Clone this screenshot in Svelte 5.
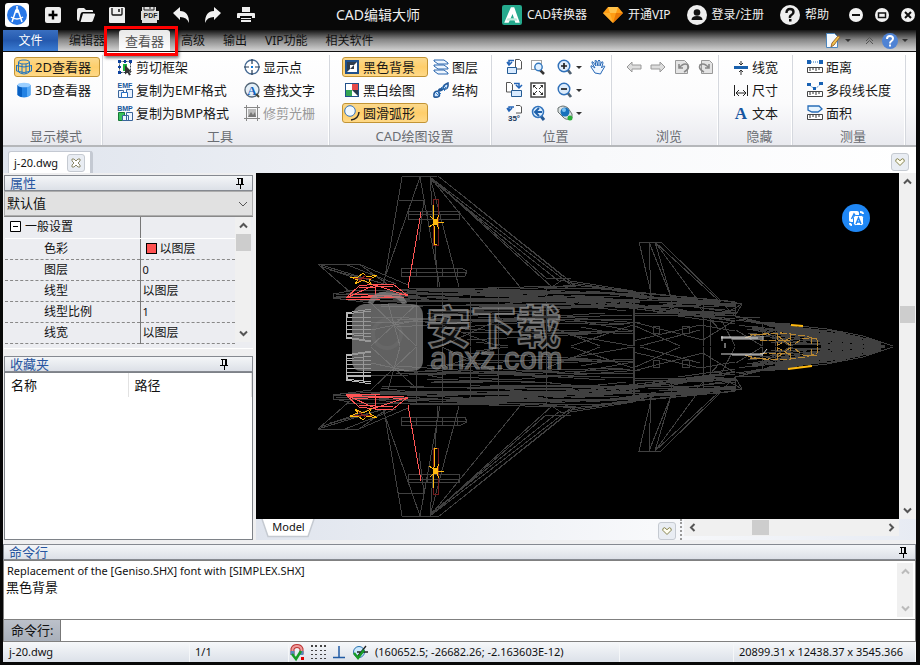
<script lang="ts">
  type Item = { icon: string; label: string; active?: boolean; disabled?: boolean };

  const icons: Record<string, string> = {
    plus: '<rect width="16" height="16" rx="2" fill="#eee"/><path d="M8 3.5v9M3.5 8h9" stroke="#000" stroke-width="2.4"/>',
    open: '<path d="M0 12V3q0-2 2-2h5l2 2h6q1 0 1 1v1H6Q4 5 3.500 7L2 14Q0 14 0 12z" fill="#eee"/><path d="M6 6.500h11q1.500 0 1 1.500l-2 5.500q-.5 1.500-2 1.500H3.500z" fill="#eee"/>',
    save: '<path d="M1 0h14l1 1v15H1q-1 0-1-1V1z" fill="#eee"/><path d="M3 1v6q0 1 1 1h8q1 0 1-1V1" fill="none" stroke="#111" stroke-width="1.300"/><path d="M10 2v3" stroke="#111" stroke-width="1.500"/>',
    pdf: '<path d="M1 0h14v4h3v9h-2v3H1v-3h-1V4h1z" fill="#ddd"/><path d="M3 0v3h10V0" fill="none" stroke="#222"/><path d="M9 0v2" stroke="#222"/><text x="9.500" y="11" text-anchor="middle" font-size="7" font-weight="700" font-family="Liberation Sans" fill="#222">PDF</text>',
    undo: '<path d="M0 6L7 0v4q9 0 9 12q-2-6-9-6v3z" fill="#f2f2f2"/>',
    redo: '<path d="M16 6L9 0v4q-9 0-9 12q2-6 9-6v3z" fill="#f2f2f2"/>',
    print: '<path d="M5 0h8v5H5zM0 7q0-1 1-1h16q1 0 1 1v4h-3V9H3v2H0zM4 11h10v4H4z" fill="#eee"/><path d="M4 12.500h10" stroke="#111"/>',
    wire: '<g fill="none" stroke="#2475bd"><ellipse cx="8" cy="3" rx="5.500" ry="2"/><path d="M2.500 3v10q5.500 4 11 0V3M6 5v10M10 5v10M.5 6.500q7.500 3 15 0M.5 12q7.500 3 15 0M.5 6v6M15.500 6v6"/></g>',
    cylinder: '<path d="M1.500 3v10q6.500 5 13 0V3z" fill="#2382e4"/><path d="M1.500 3v10q2 2 4.500 2V4z" fill="#075fc2"/><path d="M11 4v11q2-.5 3.500-2V3z" fill="#58aaf6"/><ellipse cx="8" cy="3" rx="6.500" ry="2.300" fill="#9bcfff"/>',
    cut: '<rect x="2.500" y="2.500" width="11" height="11" fill="none" stroke="#345" stroke-dasharray="2 1"/><path d="M1 1h3v3H1zM7 1h2v3H7zM12 1h3v3h-3zM1 7h3v2H1zM1 12h3v3H1z" fill="#0c42a0"/><path d="M6 5h4v7H6z" fill="#1cb33b"/><path d="M8 6l7 7-3-.2 2 3-2 .8-1.500-3-2.500 2z" fill="#333"/>',
    emf: '<path d="M1.500 8.500h5v7h-5zM9.500 7.500h6v8h-6z" fill="#e8f2ff" stroke="#39649a"/><path d="M4.500 10.500h6v5h-6z" fill="#fff" stroke="#246cc0"/><text x="8" y="5.500" text-anchor="middle" font-size="7" font-weight="700" font-family="Liberation Sans" fill="#16579b">EMF</text>',
    bmp: '<path d="M1.500 7.500h6v8h-6z" fill="#37c05c" stroke="#167836"/><path d="M9.500 7.500h6v8h-6zM5.500 10.500h6v5h-6z" fill="#edf6ff" stroke="#39649a"/><text x="8" y="5.500" text-anchor="middle" font-size="7" font-weight="700" font-family="Liberation Sans" fill="#16579b">BMP</text>',
    point: '<circle cx="8" cy="8" r="7" fill="#fff" stroke="#476b94" stroke-width="1.300"/><path d="M8 0v5M8 11v5M0 8h5M11 8h5" stroke="#243a55" stroke-width="1.200"/><path d="M7 7h2v2H7z" fill="#0879dd"/>',
    find: '<circle cx="8" cy="8" r="7" fill="#e4eff7" stroke="#526577" stroke-width="1.300"/><text x="8" y="12.500" text-anchor="middle" font-size="13" font-weight="700" font-family="Liberation Serif" fill="#1463bd">A</text><path d="M12 12l3 3" stroke="#443" stroke-width="2"/>',
    raster: '<path d="M2.500 0v16M13.500 0v16M0 2.500h16M0 13.500h16" stroke="#888"/><path d="M4 4h8v8H4z" fill="#bbb"/><path d="M4 12l3-5 2 3 2-3 1 5z" fill="#777"/>',
    black: '<rect x="1" y="1" width="14" height="14" fill="#20508a"/><path d="M3 3h10v10H3z" fill="#fff"/><path d="M3 3h10L3 13z" fill="#303d4c"/><path d="M6 6h4v4H6z" fill="#fff"/><path d="M10 6v4H6z" fill="#303d4c"/>',
    mono: '<rect x="1" y="1" width="14" height="14" fill="#20508a"/><path d="M2 2h12v12H2z" fill="#fff"/><path d="M8 2h6v6H8z" fill="#e64a4a"/><path d="M2 8h6v6H2z" fill="#33a553"/><path d="M8 8h6v6H8z" fill="#28384c"/><path d="M8 8l6 6H8z" fill="#fff"/>',
    arc: '<circle cx="6" cy="6" r="5.300" fill="#f0f8ff" stroke="#3374bf"/><path d="M15 7q-.5 7-8 8" fill="none" stroke="#222" stroke-width="1.500"/>',
    layers: '<path d="M1 1h10l4 3v1H5L1 2z" fill="#eef6ff" stroke="#2865ad"/><path d="M1 6h10l4 3v1H5L1 7z" fill="#eef6ff" stroke="#2865ad"/><path d="M1 11h10l4 3v1H5l-4-3z" fill="#eef6ff" stroke="#2865ad"/>',
    structure: '<path d="M1 15q-1-6 4-6t5-3 5-5q1 7-5 6t-4 4-5 4" fill="#cfe5ff" stroke="#245999" stroke-width="1.600"/><path d="M2 10l4 4M5 9l3 3M8 5l4 4M10 3l4 4" stroke="#3380c8"/>',
    rotateLeft: '<path d="M9.500.5h4l2 2V10H9.500z" fill="#fff" stroke="#555"/><path d="M1.500 8.500h9v6h-9z" fill="#d9ebff" stroke="#245b94"/><path d="M8 1.500H3v3M1 3l2 3 3-3" fill="none" stroke="#2364b6" stroke-width="1.500"/>',
    rotateRight: '<path d="M.5.5h4l2 2V10h-6z" fill="#fff" stroke="#555"/><path d="M5.500 8.500h10v6h-10z" fill="#d9ebff" stroke="#245b94"/><path d="M8 1.500h5v3M10 3l3 3 3-3" fill="none" stroke="#2364b6" stroke-width="1.500"/>',
    rotate35: '<path d="M10 .5h4l1.500 1.500V8H10" fill="#fff" stroke="#555"/><path d="M8 2H3v3M1 3l2 3 3-3" fill="none" stroke="#2364b6" stroke-width="1.500"/><text x="8" y="15.500" text-anchor="middle" font-size="8" font-weight="700" font-family="Liberation Sans" fill="#17385c">35°</text>',
    zoomRect: '<path d="M1.500 1.500h10v9h-10z" fill="none" stroke="#444" stroke-dasharray="1 1"/><path d="M10 11l4 4" stroke="#333" stroke-width="2.500"/><circle cx="8.500" cy="8" r="3.700" fill="#e1f0ff" stroke="#3277bd" stroke-width="1.400"/>',
    fit: '<rect x="1" y="1" width="14" height="14" fill="#fff" stroke="#444" stroke-width="1.500"/><path d="M3 6V3h3zM10 3h3v3zM13 10v3h-3zM6 13H3v-3z" fill="#333"/><path d="M4 4l3 3M12 4L9 7M4 12l3-3M12 12L9 9" stroke="#333"/>',
    zoomBack: '<path d="M10 10l4 5" stroke="#265994" stroke-width="3"/><circle cx="8" cy="7" r="5.500" fill="#deefff" stroke="#3274bd" stroke-width="1.500"/><path d="M12 7H6M9 3L5 7l4 4" fill="none" stroke="#2061aa" stroke-width="2"/>',
    zoomIn: '<path d="M10 10l4 5" stroke="#4f6070" stroke-width="2.800"/><circle cx="7" cy="7" r="5.800" fill="#ddecfb" stroke="#2f70b9" stroke-width="1.400"/><path d="M7 4v6M4 7h6" stroke="#222" stroke-width="1.700"/>',
    zoomOut: '<path d="M10 10l4 5" stroke="#4f6070" stroke-width="2.800"/><circle cx="7" cy="7" r="5.800" fill="#ddecfb" stroke="#2f70b9" stroke-width="1.400"/><path d="M4 7h6" stroke="#222" stroke-width="1.700"/>',
    view: '<path d="M1 3q5-4 10 0l4 6v4q-6 3-9-1L1 7z" fill="#dbe1e1" stroke="#67706f"/><circle cx="8" cy="7" r="4.500" fill="#1871bc"/><circle cx="7" cy="5" r="2" fill="#7bc1f2"/><circle cx="13" cy="13" r="2.500" fill="#2aad39"/>',
    hand: '<path d="M5 14L1 8q-.5-2 1-1l3 2-3-5q-.5-2 1-1l3 4-1-5q.3-2 1.500 0l1.500 5V2q1-2 2 0v5l1.500-4q1.500-1 1.500 1l-1.500 5 2-2q2 0 1 1l-3 5-1 2z" fill="#f2f8ff" stroke="#2768b6"/>',
    prev: '<path d="M1 8l5-5v3h9v4H6v3z" fill="#ddd" stroke="#999"/>',
    next: '<path d="M15 8l-5-5v3H1v4h9v3z" fill="#ddd" stroke="#999"/>',
    pageBack: '<path d="M1.500 1.500h9l3 3v10h-12z" fill="#e4e4e4" stroke="#999"/><path d="M5 5v4h4M5 9q5-6 9-3 2 4-4 7" fill="none" stroke="#888" stroke-width="1.600"/>',
    pageNext: '<path d="M3.500 1.500h8l3 3v10h-11z" fill="#e4e4e4" stroke="#999"/><path d="M11 5v4H7M11 9q-5-6-9-3-2 4 4 7" fill="none" stroke="#888" stroke-width="1.600"/>',
    lineWidth: '<path d="M8 2v4M8 11v5M6 4l2 2 2-2M6 13l2-2 2 2" fill="none" stroke="#333"/><path d="M1 7h14v3H1z" fill="#1a61ad"/>',
    size: '<path d="M1.500 3v11M14.500 3v11M3 11h10M6 8l-3 3 3 3M10 8l3 3-3 3" fill="none" stroke="#222"/>',
    text: '<text x="8" y="14" text-anchor="middle" font-size="17" font-weight="700" font-family="Liberation Serif" fill="#1755a0">A</text>',
    distance: '<path d="M2 3h12" stroke="#2976c4" stroke-dasharray="1 1"/><path d="M0 1h4v4H0zM12 1h4v4h-4z" fill="#1861b3"/><path d="M.5 8.500h15v5H.5z" fill="#fff" stroke="#444"/><path d="M3 9v3M6 9v2M9 9v3M12 9v2" stroke="#333"/>',
    polyline: '<path d="M2 3l6 4 6-5" fill="none" stroke="#2976c4" stroke-dasharray="1 1"/><path d="M0 1h4v3H0zM6 5h3v3H6zM12 0h4v3h-4z" fill="#1861b3"/><path d="M.5 9.500h15v5H.5z" fill="#fff" stroke="#444"/><path d="M3 10v3M6 10v2M9 10v3M12 10v2" stroke="#333"/>',
    area: '<path d="M1 1h11l3 3-4 3H5L1 5z" fill="#e6f4ff" stroke="#286db8" stroke-width="1.300"/><path d="M.5 9.500h15v5H.5z" fill="#fff" stroke="#444"/><path d="M3 10v3M6 10v2M9 10v3M12 10v2" stroke="#333"/>',
    edit: '<path d="M1.500.5h8l3 3v11h-11z" fill="#f5faff" stroke="#4c86bd"/><path d="M15 4l-6 8-3 2 1-4 6-7z" fill="#f3c34c" stroke="#9c6830"/>',
    magnet: '<path d="M3.500 11V5q1-3 4.500-3t4.500 3v5" fill="none" stroke="#b33" stroke-width="4"/><path d="M3.500 11V5q1-3 4.500-3t4.500 3v5" fill="none" stroke="#f09a9a" stroke-width="2"/><path d="M3.500 11V7M12.500 11V7" stroke="#5589bc" stroke-width="4"/><path d="M3 10l4 5 5-8" fill="none" stroke="#169c25" stroke-width="2.500"/><path d="M12 13h3v3h-3z" fill="#d00"/>',
    dots: '<path d="M1 1h2v2H1zM5 1h2v2H5zM10 1h2v2h-2zM14 1h2v2h-2zM1 6h2v1H1zM5 6h2v1H5zM10 6h2v1h-2zM14 6h2v1h-2zM1 10h2v1H1zM5 10h2v1H5zM10 10h2v1h-2zM14 10h2v1h-2zM1 14h2v1H1zM5 14h2v1H5zM10 14h2v1h-2zM14 14h2v1h-2z" fill="#444"/>',
    ortho: '<path d="M8 2v11M2 13.500h12" fill="none" stroke="#205ba4" stroke-width="1.500"/>',
    snap: '<circle cx="7" cy="8" r="5.500" fill="#cbe9ff" stroke="#2771ad"/><path d="M5 8h11M5 13L14 2" stroke="#222" stroke-width="1.300"/><path d="M2 9l4 5 6-8" fill="none" stroke="#169c25" stroke-width="2.500"/>'
  };

  const quick = [
    ['plus', '新建'], ['open', '打开'], ['save', '保存'], ['pdf', 'PDF'],
    ['undo', '撤销'], ['redo', '重做'], ['print', '打印']
  ];
  const tabs = ['编辑器', '查看器', '高级', '输出', 'VIP功能', '相关软件'];

  const groups: { id: string; title: string; items: Item[] }[] = [
    { id: 'modes', title: '显示模式', items: [
      { icon: 'wire', label: '2D查看器', active: true },
      { icon: 'cylinder', label: '3D查看器' }
    ] },
    { id: 'tools', title: '工具', items: [
      { icon: 'cut', label: '剪切框架' },
      { icon: 'emf', label: '复制为EMF格式' },
      { icon: 'bmp', label: '复制为BMP格式' },
      { icon: 'point', label: '显示点' },
      { icon: 'find', label: '查找文字' },
      { icon: 'raster', label: '修剪光栅', disabled: true }
    ] },
    { id: 'settings', title: 'CAD绘图设置', items: [
      { icon: 'black', label: '黑色背景', active: true },
      { icon: 'mono', label: '黑白绘图' },
      { icon: 'arc', label: '圆滑弧形', active: true },
      { icon: 'layers', label: '图层' },
      { icon: 'structure', label: '结构' }
    ] },
    { id: 'position', title: '位置', items: [
      { icon: 'rotateLeft', label: '' }, { icon: 'rotateRight', label: '' }, { icon: 'rotate35', label: '' },
      { icon: 'zoomRect', label: '' }, { icon: 'fit', label: '' }, { icon: 'zoomBack', label: '' },
      { icon: 'zoomIn', label: '' }, { icon: 'zoomOut', label: '' }, { icon: 'view', label: '' },
      { icon: 'hand', label: '' }
    ] },
    { id: 'browse', title: '浏览', items: [
      { icon: 'prev', label: '' }, { icon: 'next', label: '' },
      { icon: 'pageBack', label: '' }, { icon: 'pageNext', label: '' }
    ] },
    { id: 'hide', title: '隐藏', items: [
      { icon: 'lineWidth', label: '线宽' },
      { icon: 'size', label: '尺寸' },
      { icon: 'text', label: '文本' }
    ] },
    { id: 'measure', title: '测量', items: [
      { icon: 'distance', label: '距离' },
      { icon: 'polyline', label: '多段线长度' },
      { icon: 'area', label: '面积' }
    ] }
  ];
  const dropdowns = ['zoomIn', 'zoomOut', 'view'];

  const properties = [
    ['色彩', '以图层'], ['图层', '0'], ['线型', '以图层'], ['线型比例', '1'], ['线宽', '以图层']
  ];

  // upper outline of the fuselage, the lower half is mirrored about AXIS
  const AXIS = 346;
  const outline = [
    [371, 294], [409, 289], [498, 288], [546, 288], [571, 285], [633, 291], [650, 297],
    [703, 299], [735, 302], [736, 316], [760, 322], [790, 325], [827, 329], [863, 336], [893, 346]
  ];

  function edge(x: number) {
    for (let i = 1; i < outline.length; i++) {
      const [x0, y0] = outline[i - 1];
      const [x1, y1] = outline[i];
      if (x <= x1) return y0 + ((y1 - y0) * (x - x0)) / (x1 - x0);
    }
    return AXIS;
  }

  let seed = 17;
  const random = () => (seed = (seed * 1103 + 12345) % 65536) / 65536;

  // long, almost level panel lines between two depths below the outline
  function strands(count: number, left: number, right: number, top: number, bottom: number, slope: number) {
    let d = '';
    for (let i = 0; i < count; i++) {
      const x = Math.round(left + random() * (right - left) * 0.8);
      const end = Math.min(right, Math.round(x + 30 + random() * 130));
      const depth = top + random() * (bottom - top);
      const drop = (random() - 0.5) * slope;
      const y0 = Math.min(AXIS, edge(x) + depth);
      const y1 = Math.min(AXIS, Math.max(edge(end), edge(end) + depth + drop));
      d += `M${x} ${Math.round(y0)}L${end} ${Math.round(y1)}`;
    }
    return d;
  }

  function meshPath() {
    let d = 'M' + outline.map((p) => p.join(' ')).join('L');
    for (const x of [416, 442, 470, 498, 546, 633, 634, 703, 762, 775, 790, 832, 858, 870, 880]) {
      d += `M${x} ${AXIS}V${Math.round(edge(x))}`;
    }
    d += strands(44, 371, 640, 0, 14, 5);
    d += strands(18, 371, 640, 14, 28, 14);
    d += strands(20, 371, 633, 28, 57, 16);
    d += strands(20, 560, 735, 0, 5, 2);
    d += strands(14, 560, 735, 12, 18, 4);
    d += strands(10, 633, 735, 2, 18, 12);
    d += strands(44, 736, 880, 0, 9, 3);
    d += strands(14, 736, 885, 9, 20, 8);
    return d;
  }
  const mesh = meshPath();

  let command = $state('');
  let preset = $state('默认值');
</script>

{#snippet icon(name: string)}
  <svg class="icon" viewBox="0 0 16 16" aria-hidden="true">{@html icons[name]}</svg>
{/snippet}

{#snippet pin()}
  <button class="pin" aria-label="pin">
    <svg viewBox="0 0 9 11"><path d="M2.500 1v5.500M1 .5h6M0 6.500h8M4.500 7v4" stroke="#000" fill="none" /><path d="M6 1v5" stroke="#000" stroke-width="2" /></svg>
  </button>
{/snippet}

{#snippet chevron(dir: string)}
  <button class="chevron {dir}" aria-label={dir}>
    <svg viewBox="0 0 9 9"><path d="M1 6.500L4.500 3 8 6.500" fill="none" stroke="currentColor" stroke-width="2" /></svg>
  </button>
{/snippet}

{#snippet heart()}
  <button class="heart" aria-label="favourite">
    <svg viewBox="0 0 10 8"><path d="M5 7.500L.7 3.200Q.5.8 2.700.7L5 2.700 7.300.7Q9.500.8 9.300 3.200z" fill="#fffef0" stroke="#85824e" /></svg>
  </button>
{/snippet}

<div class="window">
  <header class="titlebar">
    <svg class="logo" viewBox="0 0 24 24">
      <rect width="24" height="24" rx="3" fill="#fff" />
      <circle cx="12" cy="12" r="10" fill="#2878e8" />
      <path d="M12 3v5M11 7L7 19M13 7l4 12M6 14q6 4 12 0" fill="none" stroke="#fff" stroke-width="1.500" />
      <circle cx="12" cy="8" r="2" fill="#fff" />
    </svg>
    <div class="quick">
      {#each quick as [name, label]}
        <button aria-label={label}><svg viewBox="0 0 17 16">{@html icons[name]}</svg></button>
      {/each}
    </div>
    <h1>CAD编辑大师</h1>
    <nav class="account">
      <button class="converter">
        <svg viewBox="0 0 18 18"><rect width="18" height="18" rx="2" fill="#25a98d" /><path d="M2 16L8 2h3l5 14h-4l-2.500-8L6 16z" fill="#fff" /><path d="M5 12h8l1 2H4z" fill="#bcebdc" /></svg>
        CAD转换器
      </button>
      <button class="vip">
        <svg viewBox="0 0 20 18"><path d="M5 1h10l5 6-10 10L0 7z" fill="#ff9d14" /><path d="M5 1h10l-2 6H7z" fill="#ffc24b" /><path d="M0 7h7l3 10z" fill="#ffb02e" /><path d="M20 7h-7l-3 10z" fill="#e87806" /></svg>
        开通VIP
      </button>
      <button class="login">
        <svg viewBox="0 0 20 20"><circle cx="10" cy="10" r="10" fill="#eee" /><circle cx="10" cy="7.500" r="3.300" fill="#111" /><path d="M4.500 15q0-4 5.500-4t5.500 4z" fill="#111" /></svg>
        登录/注册
      </button>
      <button class="help">
        <svg viewBox="0 0 20 20"><circle cx="10" cy="10" r="10" fill="#eee" /><path d="M6.500 8q0-4 3.500-4t3.500 3q0 2-2 3t-1.500 3" fill="none" stroke="#111" stroke-width="2.400" /><path d="M9 14h2.500v2.500H9z" fill="#111" /></svg>
        帮助
      </button>
    </nav>
    <div class="controls">
      <button aria-label="minimize"><svg viewBox="0 0 14 14"><circle cx="7" cy="7" r="7" fill="#f2f2f2" /><path d="M3 7h8" stroke="#111" stroke-width="2" /></svg></button>
      <button aria-label="maximize"><svg viewBox="0 0 14 14"><circle cx="7" cy="7" r="7" fill="#f2f2f2" /><rect x="3.500" y="5" width="7" height="4.500" fill="none" stroke="#111" stroke-width="1.500" /></svg></button>
      <button aria-label="close"><svg viewBox="0 0 14 14"><circle cx="7" cy="7" r="7" fill="#f2f2f2" /><path d="M4 4l6 6M10 4l-6 6" stroke="#111" stroke-width="2" /></svg></button>
    </div>
  </header>

  <nav class="tabs">
    <button class="file">文件</button>
    {#each tabs as tab}
      <button class="tab" class:current={tab === '查看器'}>{tab}</button>
    {/each}
    <div class="tab-tools">
      <button aria-label="style">{@render icon('edit')}<i class="caret"></i></button>
      <button aria-label="collapse"><svg class="fold" viewBox="0 0 9 9"><path d="M1 5l3.500-3.500L8 5M1 8l3.500-3.500L8 8" fill="none" stroke="#555" /></svg></button>
      <button class="about" aria-label="about">
        <svg class="icon" viewBox="0 0 16 16"><circle cx="8" cy="8" r="8" fill="#4f83d4" /><path d="M5 6q0-3 3-3t3 2.500q0 1.500-1.500 2.500T8 10.500" fill="none" stroke="#fff" stroke-width="2" /><path d="M7 11.500h2v2H7z" fill="#fff" /></svg>
        <i class="caret"></i>
      </button>
    </div>
  </nav>

  <section class="ribbon">
    {#each groups as group}
      <div class="group {group.id}">
        <div class="items">
          {#each group.items as item}
            <button class="tool" class:active={item.active} disabled={item.disabled} aria-label={item.label || item.icon}>
              {@render icon(item.icon)}{#if item.label}<span>{item.label}</span>{/if}
              {#if dropdowns.includes(item.icon)}<i class="caret"></i>{/if}
            </button>
          {/each}
        </div>
        <h2>{group.title}</h2>
      </div>
    {/each}
  </section>

  <div class="documents">
    <div class="document">
      <span>j-20.dwg</span>
      <button aria-label="close"><svg viewBox="0 0 10 10"><path d="M1 1h2l2 2 2-2h2v2L7 5l2 2v2H7L5 7 3 9H1V7l2-2-2-2z" fill="#fff" stroke="#8b8869" /></svg></button>
    </div>
    {@render heart()}
  </div>

  <main>
    <aside>
      <div class="panel-title"><h3>属性</h3>{@render pin()}</div>
      <div class="preset">
        <select bind:value={preset} aria-label="属性"><option>默认值</option></select>
        <svg viewBox="0 0 10 6"><path d="M1 1l4 4 4-4" fill="none" stroke="#555" /></svg>
      </div>
      <div class="properties">
        <table>
          <tbody>
            <tr class="section"><th><svg viewBox="0 0 11 11"><path d="M.5.5h10v10H.5zM3 5.500h5" fill="#fff" stroke="#000" /></svg>一般设置</th><td></td></tr>
            {#each properties as [name, value], i}
              <tr><th>{name}</th><td class:latin={value.length === 1}>{#if i === 0}<i class="swatch"></i>{/if}{value}</td></tr>
            {/each}
          </tbody>
        </table>
        <div class="scroll vertical">{@render chevron('up')}<i class="thumb"></i>{@render chevron('down')}</div>
      </div>
      <div class="panel-title favorites-title"><h3>收藏夹</h3>{@render pin()}</div>
      <div class="favorites">
        <table><thead><tr><th>名称</th><th>路径</th></tr></thead></table>
      </div>
    </aside>

    <section class="workspace">
      <div class="canvas">
        <svg class="model" viewBox="256 173 643 346" preserveAspectRatio="xMidYMid meet">
          <defs>
            <g id="half" fill="none" stroke="#404040" shape-rendering="crispEdges">
              <path d={mesh} />
              <!-- main wing -->
              <path d="M384 283L402 177L438 176L571 282M383 283L420 177M399 200H424M420 177L440 287M424 200L419 240M430 177L438 287M430 177L459 287M430 177L520 287M430 177L552 287M430 177L546 278M430 177L571 285M431 180L560 282M438 176L564 277M546 278H571M552 287L562 280L575 284M440 215L459 287M571 281L633 291M571 283L633 292M575 284L565 288" />
              <path d="M408 211h51v8h-51zM408 214h51M427 211v8M401 268h60l6 3-2 5h-64zM401 272h66M416 268v8M442 268v8M457 268v8" />
              <!-- tailplane -->
              <path d="M318 264H359L408 285M318 264L351 293M318 264L384 284M345 264L396 284M320 266L372 284M330 270L378 282M359 264L387 284" />
              <path d="M333 294L350 291M333 294V298L371 303M333 297L420 299M346 290H546M336 294H400M336 296H420M340 299L400 302M346 294L650 293M371 300H720M409 302L640 299M410 305L560 307M500 308L700 306M371 317L560 322M371 323L633 315" />
              <!-- canard -->
              <path d="M652 297L639 242H661L720 300M649 242L651 297M649 242L671 297M655 242L671 297M655 242L696 298M655 242L718 300M720 300L742 304L735 316L722 303M742 304L726 313M735 316L760 322L790 324M671 297V314M690 297L720 330M633 315H735M633 313H735" />
              <path d="M653 326h6v7h-6zM682 326h7v7h-7zM633 341L700 325L735 331M633 322L703 340M633 325L680 346M640 346L700 330M665 306L735 322M710 321H722L735 346M710 321V346M703 340L735 320M371 303L416 346M416 305L371 346M388 303L400 346M371 330L442 315M442 346L498 320M498 346L442 325M571 346L633 325M546 325L600 346" />
              <path d="M736 317H760M736 320L820 331M762 330L790 346L832 333M832 346L858 336L880 346M832 333L858 346L870 339M736 330L762 346" />
            </g>
            <g id="half-colors" fill="none" shape-rendering="crispEdges">
              <path d="M433 199h5v46h-5z" stroke="#721b1b" />
              <path d="M421 212L408 288M346 298L359 286L375 284H393L408 296M346 298L375 285L408 296M346 298L408 294M348 297H404M352 294L400 297M375 284V298M359 288L393 286M346 299H380" stroke="#ff5555" />
              <path d="M433 205V226M434 226V244L437 245M436 222L439 215M436 222L429 227M436 222L439 229M437 222H444M436 222L430 216M350 277H358L363 273L367 277L377 275L369 280L371 284L363 280L355 284L358 280z" stroke="#ffb90f" />
              <path d="M434 219h4v6h-4z" fill="#ffb90f" />
              <path d="M354 278H372M358 282L366 275" stroke="#8b2020" />
              <path d="M346 313L371 309M346 314L371 311M346 317H371M346 318L371 317M346 321H371M346 325H371M346 329H371M346 333H371M346 337L371 341M346 338L371 342M346 334L371 337M346 313V338M347 313V318M363 310V341" stroke="#b8b8b8" />
              <path d="M745 338Q758 333 782 333L806 336 817 340V346M750 335L770 334M760 340H790M777 333V346M790 333V346M795 344L803 338H817M778 336L790 345M790 338L778 345M811 337V346" stroke="#b88732" stroke-dasharray="7 2" />
            </g>
          </defs>
          <use href="#half" /><use href="#half" transform="translate(0 693) scale(1 -1)" />
          <use href="#half-colors" /><use href="#half-colors" transform="translate(0 693) scale(1 -1)" />
          <path d="M721 337H764M721 338H758M732 339H764M722 336V341M725 343V348M721 354H763L767 349M732 355H763" stroke="#d8d8d8" fill="none" />
          <path d="M791 325L803 326M788 369L812 366" stroke="#ffb90f" stroke-width="2" />
          <g class="watermark">
            <path d="M370 304Q374 294 387 294T405 304" fill="none" stroke="#888" stroke-width="5" />
            <path d="M364 304H411Q423 304 423 316V360Q423 371 412 371H362Q352 371 352 361V316Q354 306 364 304z" fill="#8a8a8a" />
            <circle cx="387" cy="334" r="14" fill="none" stroke="#aaa" stroke-width="4" opacity=".3" />
            <text class="brand" x="426" y="344">安下载</text>
            <text class="site" x="430" y="369">anxz.com</text>
          </g>
        </svg>
        <button class="translate" aria-label="翻译">
          <svg viewBox="0 0 28 28"><circle cx="14" cy="14" r="14" fill="#1f87f5" /><rect x="7" y="7" width="10" height="11" rx="2" fill="#fff" /><path d="M9.500 15l2.500-5 2 3" fill="none" stroke="#1f87f5" stroke-width="1.500" /><rect x="11.500" y="11.500" width="10" height="10" rx="2" fill="#fff" stroke="#1f87f5" /><path d="M14 20l2.500-6 2.500 6M15 18h3" fill="none" stroke="#1f87f5" stroke-width="1.500" /><path d="M18 8q3 0 3 2M8 19q0 2 2 2" fill="none" stroke="#fff" stroke-width="2" /></svg>
        </button>
      </div>
      <div class="scroll vertical main-scroll">{@render chevron('up')}<i class="thumb"></i>{@render chevron('down')}</div>
      <div class="sheets">
        <button class="sheet"><svg viewBox="0 0 53 19" preserveAspectRatio="none"><path d="M0 0L6 17.500H46L52 0" fill="#fff" stroke="#c5cad1" stroke-width="1.500" /></svg><span>Model</span></button>
        {@render heart()}
        <i class="grip"></i>
        <div class="scroll horizontal">{@render chevron('left')}<i class="thumb"></i>{@render chevron('right')}</div>
      </div>
    </section>
  </main>

  <section class="console">
    <div class="panel-title"><h3>命令行</h3>{@render pin()}</div>
    <div class="log">
      <div><p>Replacement of the [Geniso.SHX] font with [SIMPLEX.SHX]</p><p class="echo">黑色背景</p></div>
      <div class="scroll vertical faded">{@render chevron('up')}{@render chevron('down')}</div>
    </div>
    <div class="prompt">
      <label for="command">命令行:</label>
      <input id="command" type="text" bind:value={command} />
    </div>
  </section>

  <footer>
    <span class="name">j-20.dwg</span>
    <span class="page">1/1</span>
    <div class="snaps">
      {#each ['magnet', 'dots', 'ortho', 'snap'] as name}
        <button aria-label={name}>{@render icon(name)}</button>
      {/each}
    </div>
    <span class="coords">(160652.5; -26682.26; -2.163603E-12)</span>
    <span class="extents">20899.31 x 12438.37 x 3545.366</span>
  </footer>
</div>

<style>
  :global(body) {
    margin: 0;
    background: #080808;
  }
  .window {
    display: flex;
    flex-direction: column;
    box-sizing: border-box;
    height: 100vh;
    padding: 0 4px 3px 3px;
    overflow: hidden;
    background: #080808;
    color: #111;
    font: 13px/16px "Noto Sans", "Noto Sans CJK SC", sans-serif;
  }
  .window :global(*) {
    box-sizing: border-box;
  }
  button, input, select {
    margin: 0;
    padding: 0;
    border: 0;
    background: none;
    color: inherit;
    font: inherit;
  }
  button {
    display: flex;
    align-items: center;
    flex: none;
    white-space: nowrap;
  }
  h1, h2, h3, p {
    margin: 0;
    font-weight: 400;
  }
  svg {
    display: block;
    flex: none;
    overflow: visible;
  }
  .icon {
    width: 16px;
    height: 16px;
  }
  .caret {
    border: 3px solid transparent;
    border-top-color: #333;
    border-bottom: 0;
  }

  .titlebar {
    display: flex;
    align-items: center;
    flex: none;
    height: 30px;
    padding-left: 2px;
    color: #eee;
  }
  .logo {
    width: 24px;
    height: 24px;
  }
  .quick {
    display: flex;
    gap: 15px;
    margin-left: 16px;
  }
  .quick svg {
    width: 17px;
    height: 16px;
  }
  h1 {
    margin-left: 82px;
    font-size: 14px;
    line-height: 20px;
    white-space: nowrap;
  }
  .account {
    display: flex;
    gap: 16px;
    margin-left: auto;
    font-size: 12px;
  }
  .account button {
    gap: 5px;
  }
  .account svg {
    width: 20px;
    height: 20px;
  }
  .controls {
    display: flex;
    gap: 12px;
    margin: 0 1px 0 20px;
  }
  .controls svg {
    width: 14px;
    height: 14px;
  }

  .tabs {
    display: flex;
    align-items: stretch;
    flex: none;
    height: 22px;
    border-bottom: 1px solid #111;
    background: linear-gradient(#141414, #858585 45%, #d4d4d4);
    font-size: 12px;
  }
  .file {
    justify-content: center;
    width: 55px;
    background: linear-gradient(#3a6fc0, #2459ae 50%, #3a7bd2);
    color: #fff;
  }
  .tab {
    padding: 0 9px;
  }
  .tab.current {
    position: relative;
    padding: 0 6px;
    margin: 0 2px 0 6px;
    border-radius: 3px 3px 0 0;
    background: linear-gradient(#e8e8e8, #fff);
    color: #555;
    font-size: 13px;
  }
  .file + .tab {
    padding: 0 8px 0 11px;
  }
  .tab.current::after {
    content: "";
    position: absolute;
    inset: -4px -8px -5px -15px;
    border: 3px solid #f00;
    box-shadow: 1px 2px 3px #0008;
  }
  .tab-tools {
    display: flex;
    align-items: center;
    gap: 14px;
    margin-left: auto;
    padding-right: 8px;
  }
  .tab-tools button {
    gap: 4px;
  }
  .tab-tools button.about {
    margin-left: -6px;
  }
  .fold {
    width: 9px;
    height: 9px;
  }

  .ribbon {
    display: flex;
    flex: none;
    height: 95px;
    border-bottom: 2px solid #b5b7ba;
    background: linear-gradient(#fff, #fbfbfc 55%, #e9eaef);
  }
  .group {
    display: flex;
    flex-direction: column;
    flex: none;
    margin: 3px 0 0;
    padding: 2px 0 0 12px;
    border-right: 1px solid #d5d8de;
    box-shadow: inset -1px 0 #fff;
  }
  .modes { width: 100px; }
  .tools { width: 227px; }
  .settings { width: 162px; }
  .position { width: 120px; }
  .browse { width: 107px; }
  .hide { width: 74px; }
  .measure { width: 113px; }
  .items {
    display: grid;
    grid-template-rows: repeat(3, 20px);
    grid-auto-flow: column;
    gap: 3px;
    justify-content: start;
  }
  .modes .items { grid-template-columns: 86px; }
  .hide .items { grid-template-columns: 60px; }
  .tools .items { grid-template-columns: 124px 80px; }
  .settings .items { grid-template-columns: 86px 60px; }
  .position .items { grid-template-columns: 21px 24px 30px 20px; }
  .browse .items {
    grid-template-columns: repeat(4, 21px);
    grid-auto-flow: row;
  }
  .modes {
    padding-left: 11px;
  }
  .tool {
    gap: 3px;
    height: 20px;
    padding: 0 2px 0 1px;
    border: 1px solid transparent;
    border-radius: 3px;
    color: #181818;
  }
  .tool.active {
    border-color: #c29435;
    background: linear-gradient(#fbd98d, #fece6b 50%, #ffd987);
  }
  .tool:disabled {
    color: #999;
  }
  h2 {
    margin: 4px 4px 0 0;
    color: #6a6d72;
    font-size: 13px;
    line-height: 18px;
    text-align: center;
    white-space: nowrap;
  }

  .documents {
    display: flex;
    align-items: flex-end;
    justify-content: space-between;
    flex: none;
    height: 26px;
    padding: 0 7px 0 5px;
    background: linear-gradient(90deg, #dfe4ed, #f8f9fb 65%, #fff);
    font-size: 12px;
  }
  .document {
    display: flex;
    align-items: center;
    gap: 9px;
    height: 22px;
    padding: 0 5px;
    border: 1px solid #c4c9d2;
    border-right-width: 3px;
    border-bottom: 0;
    border-radius: 3px 3px 0 0;
    background: #fff;
  }
  .document span {
    font-size: 11px;
  }
  .document button, .heart {
    justify-content: center;
    width: 18px;
    height: 18px;
    border: 1px solid #c5cad1;
    border-radius: 3px;
    background: #e9edf3;
  }
  .document svg {
    width: 10px;
    height: 10px;
  }
  .heart svg {
    width: 10px;
    height: 8px;
  }
  .documents .heart {
    margin-bottom: 2px;
  }

  main {
    display: flex;
    flex: 1;
    min-height: 0;
    padding-bottom: 4px;
    background: #efeff0;
  }
  aside {
    display: flex;
    flex-direction: column;
    flex: none;
    width: 250px;
    margin-right: 3px;
    padding: 2px 0 0 1px;
  }
  .panel-title {
    display: flex;
    align-items: center;
    justify-content: space-between;
    flex: none;
    height: 16px;
    padding: 0 7px 0 5px;
    border: 1px solid #858990;
    background: linear-gradient(#f4f6f8, #dce0e7);
  }
  h3 {
    color: #2856a0;
    font-size: 13px;
    line-height: 12px;
  }
  .pin svg {
    width: 9px;
    height: 11px;
  }
  .favorites-title {
    margin-top: 7px;
    padding-right: 23px;
  }
  .preset {
    display: grid;
    align-items: center;
    flex: none;
    height: 25px;
    border: 1px solid #adadad;
    background: #e1e1e1;
  }
  .preset > * {
    grid-area: 1 / 1;
  }
  .preset select {
    width: 100%;
    height: 23px;
    padding: 0 0 2px 2px;
    appearance: none;
  }
  .preset svg {
    justify-self: end;
    width: 10px;
    height: 6px;
    margin-right: 4px;
    pointer-events: none;
  }
  .properties {
    display: flex;
    flex: none;
    height: 133px;
    padding: 0 1px 6px 1px;
    border-bottom: 1px solid #fff;
    border-top: 1px solid #888;
    background: #ecedf1;
    font-size: 12px;
  }
  .properties table {
    flex: 1;
    border-collapse: collapse;
    table-layout: fixed;
  }
  .properties tr {
    height: 21px;
  }
  .properties th, .properties td {
    height: 21px;
    padding: 0 2px;
    border-bottom: 1px dashed #888;
    font-weight: 400;
    line-height: 16px;
    text-align: left;
  }
  .properties th {
    width: 135px;
    padding-left: 39px;
    border-right: 1px solid #777;
  }
  .properties .section th, .properties .section td {
    border-bottom: 1px solid #fff;
  }
  .properties .section th {
    padding-left: 5px;
  }
  .section svg {
    display: inline-block;
    width: 11px;
    height: 11px;
    margin-right: 4px;
    vertical-align: -1px;
  }
  .properties .latin {
    font-size: 11px;
  }
  .swatch {
    display: inline-block;
    width: 11px;
    height: 11px;
    margin: 0 3px 0 3px;
    border: 1px solid #000;
    background: #ff5252;
    vertical-align: -1px;
  }
  .scroll {
    display: flex;
    align-items: center;
    background: #f0f0f0;
  }
  .scroll.vertical {
    flex-direction: column;
    width: 16px;
  }
  .properties .scroll {
    margin-right: 1px;
  }
  .thumb {
    width: 15px;
    height: 17px;
    background: #cdcdcd;
  }
  .chevron {
    justify-content: center;
    width: 16px;
    height: 17px;
    color: #555;
  }
  .chevron svg {
    width: 9px;
    height: 9px;
  }
  .down svg { transform: rotate(180deg); }
  .left svg { transform: rotate(-90deg); }
  .right svg { transform: rotate(90deg); }
  .down, .right {
    margin-top: auto;
  }
  .favorites {
    flex: 1;
    border: 1px solid #7e8288;
    background: #fff;
  }
  .favorites table {
    width: 100%;
    border-collapse: collapse;
  }
  .favorites th {
    height: 24px;
    padding: 0 6px;
    border-right: 1px solid #e2e2e2;
    font-weight: 400;
    text-align: left;
  }
  .favorites th:first-child {
    width: 123px;
  }

  .workspace {
    display: grid;
    grid-template-columns: minmax(0, 1fr) 17px;
    grid-template-rows: minmax(0, 1fr) 21px;
    flex: 1;
    min-width: 0;
  }
  .canvas {
    position: relative;
    background: #000;
  }
  .model {
    width: 100%;
    height: 100%;
  }
  .watermark {
    opacity: 0.7;
  }
  .brand {
    fill: #2228;
    stroke: #999;
    stroke-width: 2px;
    stroke-linejoin: round;
    font: 700 45px "Noto Sans CJK SC", sans-serif;
  }
  .site {
    fill: #777;
    stroke: #999;
    stroke-width: 1px;
    font: 31px "Liberation Sans", sans-serif;
  }
  .translate {
    position: absolute;
    top: 31px;
    right: 29px;
  }
  .translate svg {
    width: 28px;
    height: 28px;
  }
  .main-scroll .thumb {
    margin-top: 116px;
  }
  .sheets {
    display: flex;
    grid-column: 1 / 3;
    align-items: flex-start;
    padding-right: 17px;
    background: linear-gradient(90deg, #dfe4ed, #f8f9fb 60%, #e7ebf3);
    font-size: 11px;
  }
  .sheet {
    display: grid;
    place-items: center;
    width: 53px;
    height: 19px;
    margin: 0 auto 0 6px;
    line-height: 16px;
  }
  .sheet > * {
    grid-area: 1 / 1;
  }
  .sheet svg {
    width: 53px;
    height: 19px;
  }
  .sheet span {
    z-index: 1;
    padding-bottom: 3px;
  }
  .sheets .heart {
    margin-top: 3px;
  }
  .grip {
    align-self: stretch;
    margin: 0 2px 0 4px;
    border-left: 2px dotted #999;
  }
  .horizontal {
    flex: none;
    width: 215px;
    height: 17px;
  }
  .horizontal .thumb {
    margin-left: 52px;
    width: 17px;
    height: 15px;
  }
  .horizontal .right {
    margin: 0 0 0 auto;
  }

  .console {
    flex: none;
    background: #efeff0;
  }
  .log {
    display: flex;
    justify-content: space-between;
    height: 60px;
    padding: 2px;
    border: 1px solid #808080;
    background: #fff;
  }
  .log p {
    padding-left: 1px;
    font-size: 11px;
    line-height: 16px;
  }
  .log .echo {
    padding-left: 0;
    font-size: 13px;
  }
  .faded .chevron {
    color: #bbb;
  }
  .prompt {
    display: flex;
    height: 22px;
    border: 1px solid #808080;
    border-top: 0;
    background: #fff;
  }
  .prompt label {
    padding: 2px 7px 0;
    border-right: 1px solid #777;
    background: linear-gradient(#bcc1ca, #a9b0bb);
  }
  .prompt input {
    flex: 1;
    min-width: 0;
    outline: 0;
  }

  footer {
    display: flex;
    align-items: center;
    flex: none;
    height: 20px;
    background: linear-gradient(#f6f8fa, #dce1e9);
    font-size: 11px;
    white-space: nowrap;
  }
  footer > * {
    display: flex;
    align-items: center;
    align-self: stretch;
    flex: none;
    border-right: 1px solid #f5f7f9;
  }
  .name {
    width: 187px;
    padding-left: 6px;
  }
  .page {
    width: 99px;
    padding-left: 5px;
  }
  .snaps {
    gap: 5px;
    width: 86px;
    border: 0;
  }
  .coords {
    width: 245px;
  }
  .extents {
    margin-left: auto;
    padding: 0 12px 0 5px;
    border-left: 1px solid #f5f7f9;
  }
</style>
